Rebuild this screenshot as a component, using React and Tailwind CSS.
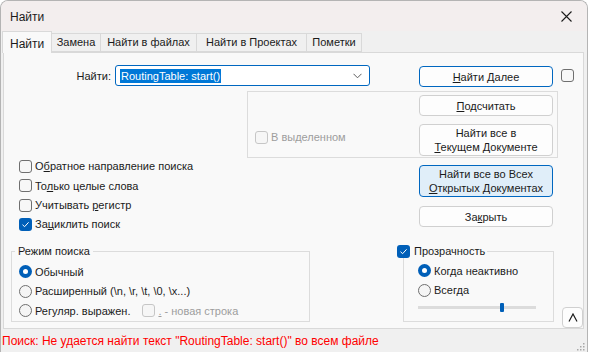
import { useState } from 'react';

const font = { fontFamily: '"Segoe UI", "Liberation Sans", Arial, sans-serif' };

function Check({ checked = false, disabled = false }) {
  if (checked) {
    return (
      <span className="flex h-[13px] w-[13px] shrink-0 items-center justify-center rounded-[3px] bg-[#005fb8]">
        <svg width="9" height="9" viewBox="0 0 9 9">
          <path d="M1.5 4.7 L3.6 6.7 L7.6 2.3" fill="none" stroke="#fff" strokeWidth="1" />
        </svg>
      </span>
    );
  }
  return (
    <span
      className={`block h-[13px] w-[13px] shrink-0 rounded-[3px] border ${
        disabled ? 'border-[#c6c6c6] bg-[#f6f6f6]' : 'border-[#6f6f6f] bg-[#f7f7f7]'
      }`}
    />
  );
}

function Radio({ on = false }) {
  if (on) {
    return (
      <span className="flex h-[13px] w-[13px] shrink-0 items-center justify-center rounded-full bg-[#005fb8]">
        <span className="block h-[5px] w-[5px] rounded-full bg-white" />
      </span>
    );
  }
  return <span className="block h-[13px] w-[13px] shrink-0 rounded-full border border-[#6f6f6f] bg-[#f5f5f5]" />;
}

function Btn({ children, tall = false, primary = false, hot = false }) {
  return (
    <div
      className={`flex w-[134px] flex-col items-center justify-center rounded-[4px] border text-center leading-[14px] text-[#1b1b1b] ${
        tall ? 'h-[32px]' : 'h-[21px]'
      } ${
        hot
          ? 'border-[#0067c0] bg-[#e0eef9]'
          : primary
            ? 'border-[#0067c0] bg-[#fdfdfd]'
            : 'border-[#d0d0d0] bg-[#fdfdfd]'
      }`}
    >
      {children}
    </div>
  );
}

function Opt({ children, checked, disabled }) {
  return (
    <div className="flex h-[19.3px] items-center gap-[3px]">
      <Check checked={checked} disabled={disabled} />
      <span className={disabled ? 'text-[#9d9d9d]' : 'text-[#1b1b1b]'}>{children}</span>
    </div>
  );
}

function RadioRow({ children, on }) {
  return (
    <div className="flex h-[19.5px] items-center gap-[3px]">
      <Radio on={on} />
      <span className="text-[#1b1b1b]">{children}</span>
    </div>
  );
}

const tabs = [
  { label: 'Замена', w: 'w-[49px]' },
  { label: 'Найти в файлах', w: 'w-[96px]' },
  { label: 'Найти в Проектах', w: 'w-[110px]' },
  { label: 'Пометки', w: 'w-[55px]' },
];

export default function App() {
  const [query] = useState('RoutingTable: start()');

  return (
    <div className="h-[352px] w-[589px] overflow-hidden bg-white text-[11px]" style={font}>
      <div className="flex h-[352px] w-[588px] flex-col overflow-hidden rounded-t-[8px] border border-b-0 border-[#b4b4b4] bg-[#f0f0f0]">
        {/* title bar */}
        <div className="flex h-[30px] shrink-0 items-center justify-between bg-[#f3eeee] pl-[9px] pr-[15px] text-[12px] text-[#1b1b1b]">
          <span className="mt-[1px]">Найти</span>
          <svg width="11" height="11" viewBox="0 0 11 11">
            <path d="M0.5 0.5 L10.5 10.5 M10.5 0.5 L0.5 10.5" stroke="#1b1b1b" strokeWidth="1.1" />
          </svg>
        </div>

        {/* tabs */}
        <div className="relative z-10 flex h-[21px] shrink-0 items-end pl-[1px]">
          <div className="-mb-[1px] flex h-[22px] w-[50px] items-start border border-b-0 border-[#d9d9d9] bg-[#f9f9f9] pl-[7px] pt-[3px] text-[12px] text-[#1b1b1b]">
            Найти
          </div>
          {tabs.map((t) => (
            <div
              key={t.label}
              className={`flex h-[19px] items-center justify-center border border-l-0 border-[#d9d9d9] bg-[#f0f0f0] text-[#1b1b1b] ${t.w}`}
            >
              {t.label}
            </div>
          ))}
        </div>

        {/* panel */}
        <div className="ml-[2px] flex h-[277px] w-[581px] shrink-0 flex-col border border-[#d9d9d9] bg-[#f9f9f9] pt-[12px]">
          <div className="flex h-[22px] items-start">
            <span className="w-[107px] pt-[3px] text-right text-[#1b1b1b]">Найти:</span>
            <div className="ml-[4px] flex h-[21px] w-[255px] items-center justify-between rounded-[3px] border border-[#0067c0] bg-white pl-[4px] pr-[7px]">
              <span className="bg-[#0078d7] px-[1px] leading-[14px] text-white">{query}</span>
              <svg width="9" height="6" viewBox="0 0 9 6">
                <path d="M0.5 0.8 L4.5 4.8 L8.5 0.8" fill="none" stroke="#5d5d5d" strokeWidth="1" />
              </svg>
            </div>
            <div className="ml-[49px] mt-[1px]">
              <Btn primary>
                <span>
                  <u>Н</u>айти Далее
                </span>
              </Btn>
            </div>
            <div className="ml-[8px] mt-[4px]">
              <Check />
            </div>
          </div>

          <div className="ml-[243px] mt-[4px] flex h-[67px] w-[311px] border border-[#dcdcdc]">
            <div className="w-[171px] pl-[7px] pt-[36px]">
              <Opt disabled>В выделенном</Opt>
            </div>
            <div className="flex flex-col gap-[8px] pt-[3px]">
              <Btn>
                <span>
                  <u>П</u>одсчитать
                </span>
              </Btn>
              <Btn tall>
                <span>Найти все в</span>
                <span>
                  <u>Т</u>екущем Документе
                </span>
              </Btn>
            </div>
          </div>

          <div className="flex h-[78px]">
            <div className="-mt-[1px] w-[415px] pl-[15px]">
              <Opt>
                О<u>б</u>ратное направление поиска
              </Opt>
              <Opt>
                То<u>л</u>ько целые слова
              </Opt>
              <Opt>
                Учитывать <u>р</u>егистр
              </Opt>
              <Opt checked>
                За<u>ц</u>иклить поиск
              </Opt>
            </div>
            <div className="flex flex-col gap-[9px] pt-[7px]">
              <Btn tall hot>
                <span>Найти все во Всех</span>
                <span>
                  <u>О</u>ткрытых Документах
                </span>
              </Btn>
              <Btn>
                <span>
                  За<u>к</u>рыть
                </span>
              </Btn>
            </div>
          </div>

          <div className="mt-[8px] flex items-start">
            <fieldset className="ml-[7px] h-[78px] w-[299px] border border-[#dcdcdc]">
              <legend className="ml-[3px] px-[3px] leading-[14px] text-[#1b1b1b]">Режим поиска</legend>
              <div className="pl-[7px] pt-[4px]">
                <RadioRow on>Обычный</RadioRow>
                <RadioRow>Расширенный (\n, \r, \t, \0, \x...)</RadioRow>
                <div className="flex h-[19.5px] items-center">
                  <Radio />
                  <span className="ml-[3px] text-[#1b1b1b]">Регуляр. выражен.</span>
                  <span className="ml-[12px]">
                    <Check disabled />
                  </span>
                  <span className="ml-[3px] text-[#9d9d9d]">
                    <u>.</u> - новая строка
                  </span>
                </div>
              </div>
            </fieldset>

            <fieldset className="ml-[93px] h-[78px] w-[151px] border border-[#dcdcdc]">
              <legend className="-ml-[7px] flex items-center gap-[4px] pr-[2px] leading-[14px] text-[#1b1b1b]">
                <Check checked />
                <span>Прозрачность</span>
              </legend>
              <div className="pl-[14px] pt-[3px]">
                <RadioRow on>Когда неактивно</RadioRow>
                <RadioRow>Всегда</RadioRow>
                <div className="relative mt-[6px] h-[3px] w-[118px] bg-[#dcdcdc]">
                  <span className="absolute -top-[3px] left-[82px] block h-[9px] w-[4px] rounded-[1px] bg-[#005fb8]" />
                </div>
              </div>
            </fieldset>

            <div className="ml-[8px] mt-[63px] flex h-[21px] w-[21px] items-center justify-center rounded-[4px] border border-[#d0d0d0] bg-[#fdfdfd]">
              <svg width="10" height="9" viewBox="0 0 10 9">
                <path d="M1 8.5 L5 1 L9 8.5" fill="none" stroke="#1b1b1b" strokeWidth="1.2" />
              </svg>
            </div>
          </div>
        </div>

        {/* status bar */}
        <div className="relative flex h-[24px] shrink-0 items-center pl-[1px] text-[12px] text-[#ff0000]">
          Поиск: Не удается найти текст "RoutingTable: start()" во всем файле
          <svg className="absolute bottom-[2px] right-[2px]" width="8" height="8" viewBox="0 0 8 8">
            <g fill="#a8a8a8">
              <rect x="6" y="0" width="1.5" height="1.5" />
              <rect x="3" y="3" width="1.5" height="1.5" />
              <rect x="6" y="3" width="1.5" height="1.5" />
              <rect x="0" y="6" width="1.5" height="1.5" />
              <rect x="3" y="6" width="1.5" height="1.5" />
              <rect x="6" y="6" width="1.5" height="1.5" />
            </g>
          </svg>
        </div>
      </div>
    </div>
  );
}
